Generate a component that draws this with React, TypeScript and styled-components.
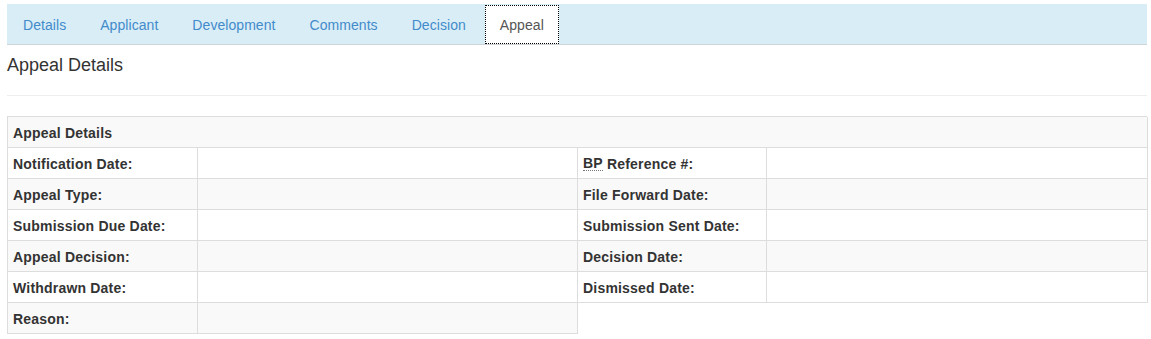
import React from 'react'
import styled, { createGlobalStyle } from 'styled-components'

const GlobalStyle = createGlobalStyle`
  body {
    margin: 0;
    background: #fff;
    font-family: "Liberation Sans", Arial, sans-serif;
    font-size: 14px;
    color: #333;
  }
`

const Page = styled.div`
  padding: 4px 4px 0 7px;
`

const Tabs = styled.ul`
  display: flex;
  list-style: none;
  margin: 0;
  padding: 0 0 0 1px;
  height: 40px;
  background: #d9edf7;
  border-bottom: 1px solid #cdd3d7;
`

const Tab = styled.li<{ $active?: boolean }>`
  display: flex;
  align-items: center;
  margin: 1px 4px 0 0;
  padding: 0 15px;
  height: 39px;
  box-sizing: border-box;
  letter-spacing: 0.06px;
  color: ${({ $active }) => ($active ? '#555' : '#428bca')};
  background: ${({ $active }) => ($active ? '#fff' : 'transparent')};
  outline: ${({ $active }) => ($active ? '1px dotted #000' : 'none')};
  outline-offset: -1px;
  cursor: pointer;
`

const Title = styled.h3`
  margin: 0;
  padding-top: 10px;
  height: 40px;
  font-size: 18px;
  font-weight: normal;
  line-height: 20px;
  color: #333;
`

const Rule = styled.hr`
  margin: 0 0 20px 0;
  border: 0;
  border-top: 1px solid #eee;
`

const Grid = styled.div`
  display: grid;
  grid-template-columns: 190px 380px 189px 381px;
  border-top: 1px solid #ddd;
  border-left: 1px solid #ddd;
  box-sizing: border-box;
  width: 1140px;
`

const Cell = styled.div<{ $striped?: boolean; $span?: number; $bold?: boolean }>`
  grid-column: span ${({ $span }) => $span || 1};
  display: flex;
  align-items: center;
  padding: 1px 5px 0;
  height: 29px;
  border-right: 1px solid #ddd;
  border-bottom: 1px solid #ddd;
  background: ${({ $striped }) => ($striped ? '#f9f9f9' : '#fff')};
  font-weight: ${({ $bold }) => ($bold ? 'bold' : 'normal')};
  letter-spacing: ${({ $bold }) => ($bold ? '0.2px' : 'normal')};
  font-size: 14px;
  color: #333;
`

const Abbr = styled.abbr`
  text-decoration: none;
  border-bottom: 1px dotted #777;
  line-height: 14px;
`

const tabs = ['Details', 'Applicant', 'Development', 'Comments', 'Decision', 'Appeal']

type Row = { left: React.ReactNode; right?: React.ReactNode }

const rows: Row[] = [
  { left: 'Notification Date:', right: <><Abbr title="Building Permit">BP</Abbr>&nbsp;Reference #:</> },
  { left: 'Appeal Type:', right: 'File Forward Date:' },
  { left: 'Submission Due Date:', right: 'Submission Sent Date:' },
  { left: 'Appeal Decision:', right: 'Decision Date:' },
  { left: 'Withdrawn Date:', right: 'Dismissed Date:' },
  { left: 'Reason:' },
]

const App: React.FC = () => (
  <>
    <GlobalStyle />
    <Page>
      <Tabs>
        {tabs.map((t) => (
          <Tab key={t} $active={t === 'Appeal'}>
            {t}
          </Tab>
        ))}
      </Tabs>
      <Title>Appeal Details</Title>
      <Rule />
      <Grid>
        <Cell $span={4} $striped $bold>
          Appeal Details
        </Cell>
        {rows.map((r, i) => {
          const striped = i % 2 === 1
          return (
            <React.Fragment key={i}>
              <Cell $striped={striped} $bold>
                {r.left}
              </Cell>
              <Cell $striped={striped} />
              {r.right && (
                <>
                  <Cell $striped={striped} $bold>
                    {r.right}
                  </Cell>
                  <Cell $striped={striped} />
                </>
              )}
            </React.Fragment>
          )
        })}
      </Grid>
    </Page>
  </>
)

export default App
